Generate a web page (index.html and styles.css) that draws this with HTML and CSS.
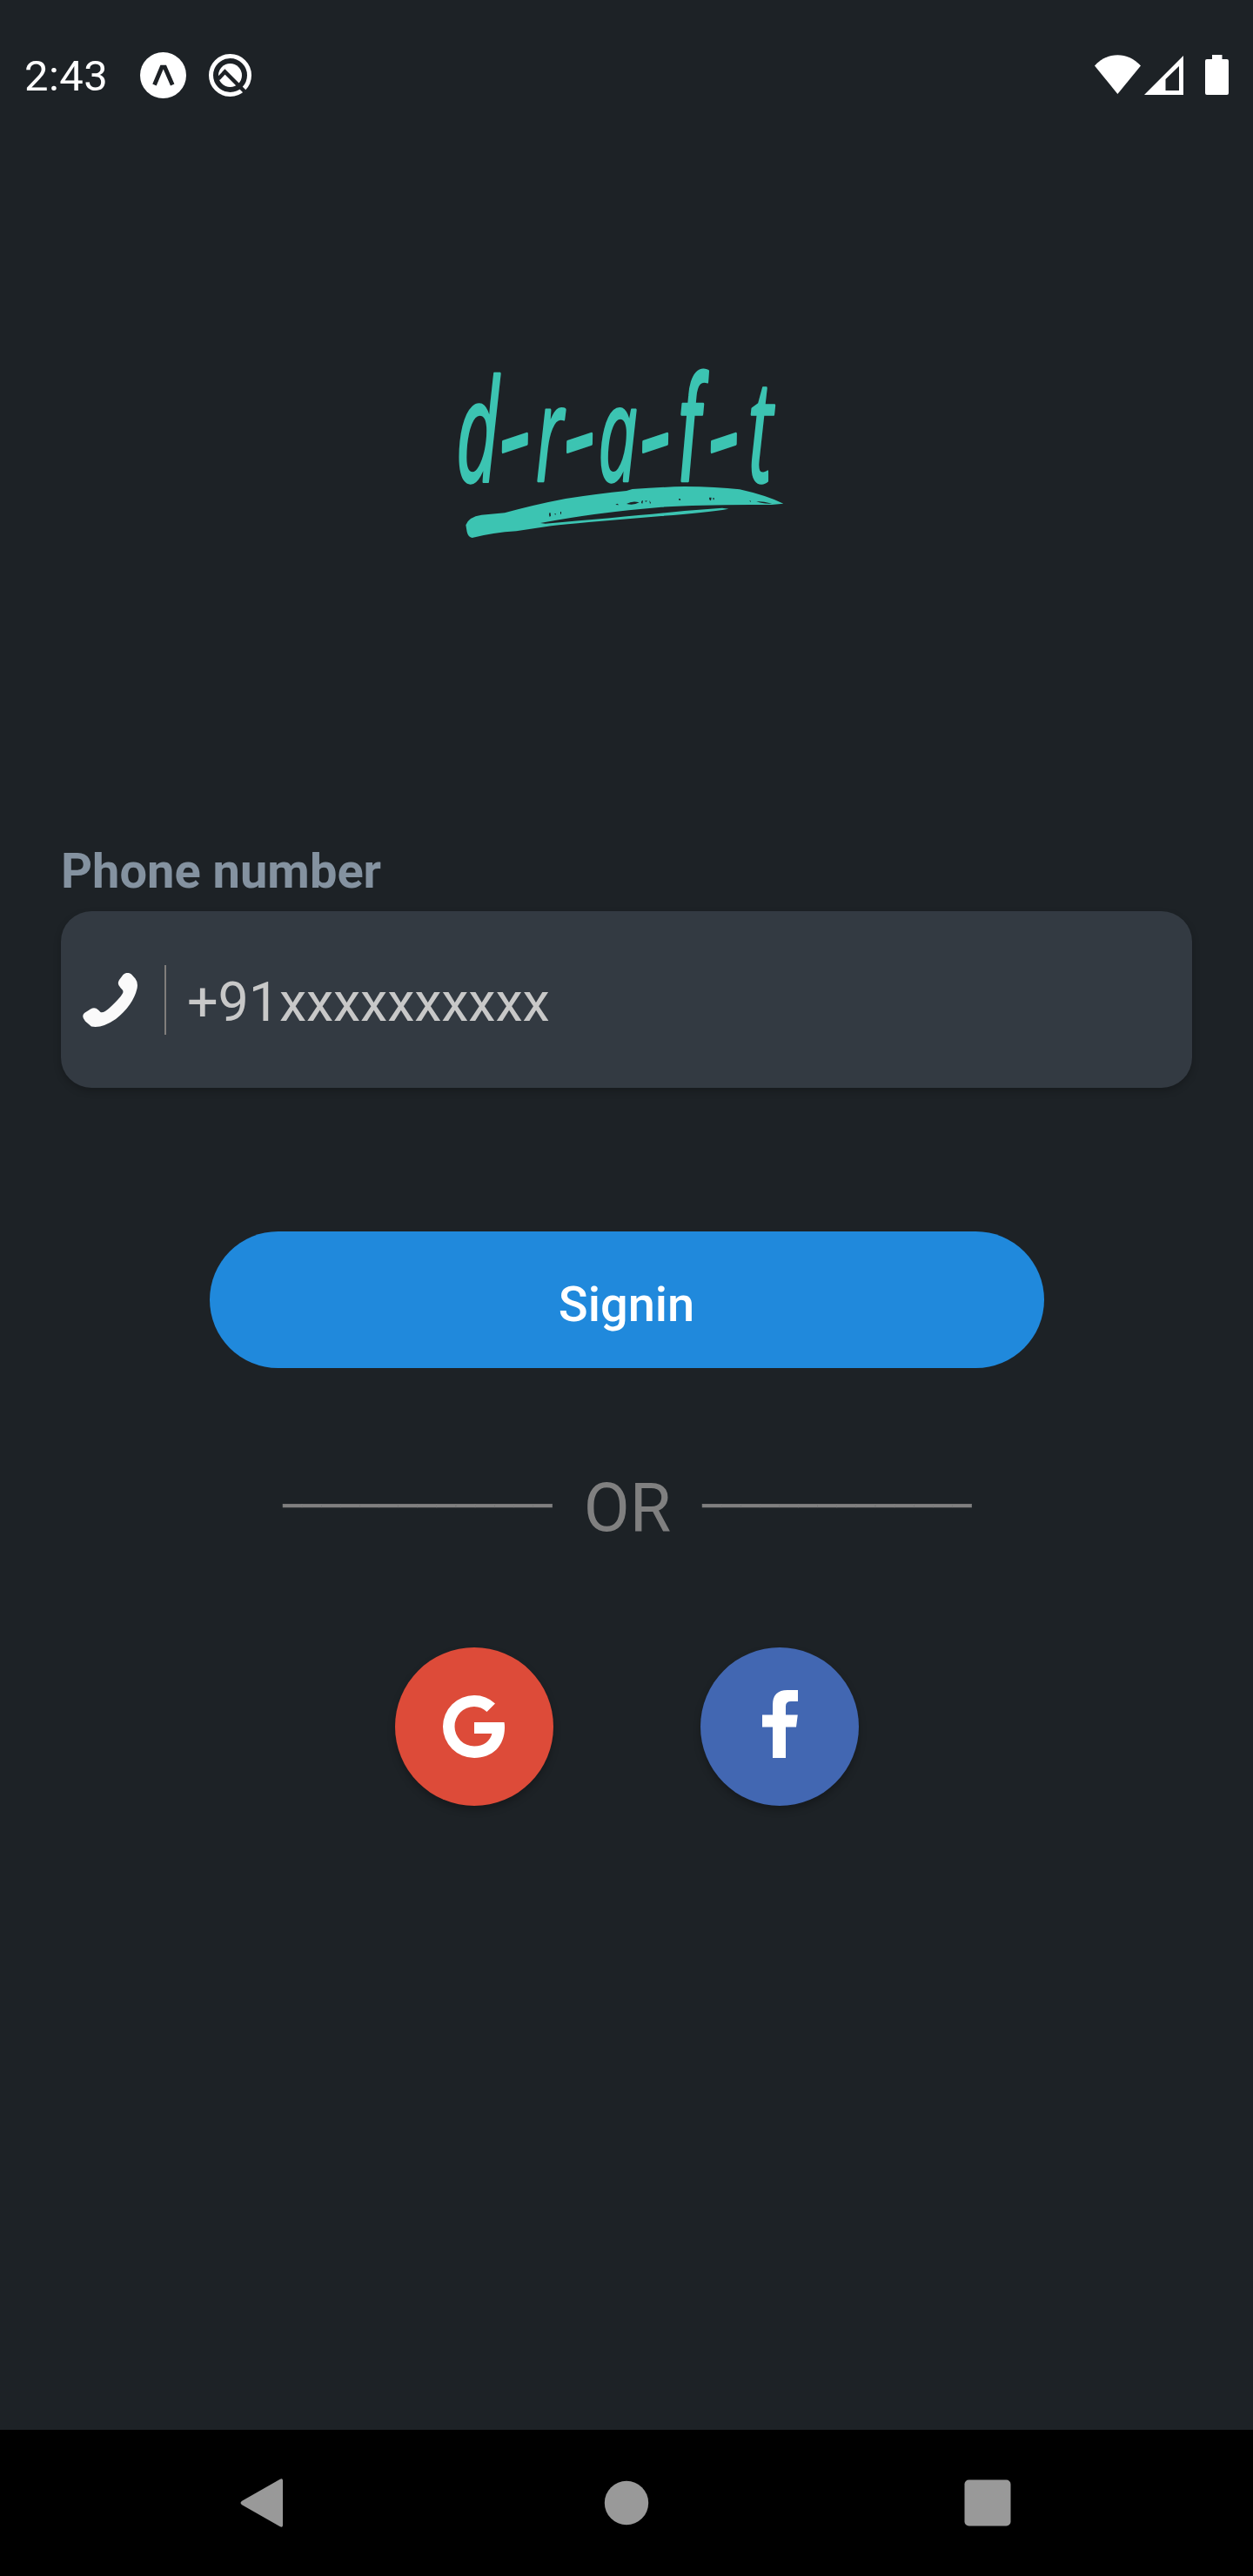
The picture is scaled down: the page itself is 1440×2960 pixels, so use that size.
FILE: index.html
```html
<!DOCTYPE html>
<html lang="en">
<head>
<meta charset="utf-8">
<title>Sign in</title>
<link rel="stylesheet" href="styles.css">
</head>
<body>
<header class="status">
  <span class="time">2:43</span>
  <svg class="expo" viewBox="0 0 53 53"><circle cx="26.5" cy="26.5" r="26.5" fill="#fff"/><path d="M16.5 37.5 25 17.2h3.4L37.2 37.5" fill="none" stroke="#1d2125" stroke-width="4.8"/></svg>
  <svg class="quick" viewBox="0 0 49 49"><circle cx="24.5" cy="24.5" r="22" fill="none" stroke="#fff" stroke-width="5"/><circle cx="24.5" cy="24.5" r="13.5" fill="#fff"/><path d="M11 28.500 18.500 20.500 41 43" fill="none" stroke="#1d2125" stroke-width="4.5"/></svg>
  <span class="spacer"></span>
  <svg class="wifi" viewBox="0 0 53 46"><path d="M26.4 45 0 12.5C15-4 38-4 53 12.5Z" fill="#fff"/></svg>
  <svg class="signal" viewBox="0 0 45 45"><path fill-rule="evenodd" d="M45 0V45H0ZM40 12 24.5 27V40H40Z" fill="#fff"/></svg>
  <svg class="battery" viewBox="0 0 27 46"><path d="M8 0H19.5V5H25a2 2 0 0 1 2 2V44a2 2 0 0 1-2 2H2a2 2 0 0 1-2-2V7a2 2 0 0 1 2-2H8Z" fill="#fff"/></svg>
</header>

<main class="login">
  <svg class="logo" viewBox="0 0 1200 660" role="img" aria-label="draft">
    <text class="wordmark" transform="translate(0 430) scale(.52 1)" x="82 398 612 826 1024 1328 1548 1782 2018" y="0 72 0 72 0 72 0 72 0" rotate="0 -10 0 -10 0 -10 0 -10 0"><tspan class="tall">d</tspan><tspan class="dash">-</tspan>r<tspan class="dash">-</tspan>a<tspan class="dash">-</tspan><tspan class="hook">f</tspan><tspan class="dash">-</tspan><tspan class="tall">t</tspan></text>
    <path fill="#3cc4b2" d="M76 580Q85 552 130 545L210 538Q310 510 420 489Q530 472 630 462L650 456Q750 449 830 447Q940 448 1020 457Q1110 477 1171 506L1130 510Q900 508 750 518Q520 537 333 573L350 575Q640 550 830 531L960 521 982 524Q900 538 750 549L500 570Q420 577 370 583L250 601Q170 606 98 624Q84 622 80 604Z"/>
    <path class="scratch" d="M630 507Q650 495 674 502Q655 513 630 507ZM1078 498Q1105 498 1132 506Q1100 508 1078 498ZM592 510l6-4 6 5ZM682 497l5-2-2 11-4-2ZM692 497l10-1-4 4ZM709 495l5 8-3 4ZM810 489l5 0 2 5-6 0ZM915 485l8 0-2 11-5-3ZM928 486l4 0 0 7-3 0ZM1054 495l5 2-2 4ZM364 538l4 0 1 10-4 4-2-8ZM381 541l6 0-2 4ZM402 534l3 0 0 10-3-3Z"/>
  </svg>

  <form class="form">
    <label class="label">Phone number</label>
    <div class="field">
      <svg class="phone" viewBox="0 0 63 62"><path d="M46.5 2Q51-2 56 1.500L60.500 6.500Q64 11 62.500 18Q58 37 38 53Q22 64 10 61.500L3 55.500Q-2 50 2 46L9 41.500Q14 38.500 18 42.500L20.500 45Q24 46.500 31 40Q45 27 46.500 22Q46.500 19.500 43.500 17Q39 13 42 8Z" fill="#fafafa"/></svg>
      <span class="divider"></span>
      <span class="placeholder">+91xxxxxxxxxx</span>
    </div>
    <button class="signin" type="button">Signin</button>
  </form>

  <div class="or">
    <span class="rule">______________</span>
    <span class="word">OR</span>
    <span class="rule">______________</span>
  </div>

  <div class="social">
    <span class="round google"><svg viewBox="0 0 182 182"><path d="M115 64.500 105.500 74A22 22 0 0 0 91 68A22.500 22.500 0 0 0 68.500 91A22.500 22.500 0 0 0 91 113.500C102 113.500 109.500 107.500 111.400 99H91V86H125.500Q126 88.500 126 92C126 113 112 127 91 127A36 36 0 0 1 91 55Q105 55 115 64.500Z"/></svg></span>
    <span class="round facebook"><svg viewBox="0 0 182 182"><path d="M83 127V91.500H71V77.500H83V66Q83 49 100 49H112V62H104Q98 62 98 67.500V77.500H111.800L110 91.500H98V127Z"/></svg></span>
  </div>
</main>

<nav class="nav">
  <svg viewBox="0 0 56 56"><path d="M5.500 25.500 48.500 1Q52 -1 52 2.500V53.500Q52 57 48.500 55L5.500 30.500Q1.500 28 5.500 25.500Z"/></svg>
  <svg class="home" viewBox="0 0 56 56"><circle cx="28" cy="28" r="25.200"/></svg>
  <svg viewBox="0 0 56 56"><rect x="1.500" y="1.500" width="53" height="53" rx="5"/></svg>
</nav>
</body>
</html>
```
FILE: styles.css
```css
* { box-sizing: border-box; }
body {
  margin: 0;
  width: 1440px;
  height: 2960px;
  display: flex;
  flex-direction: column;
  background: #1d2226;
  color: #fff;
  font-family: Roboto, sans-serif;
}
svg { display: block; flex: none; }

.status {
  height: 172px;
  display: flex;
  align-items: center;
  padding: 0 28px;
}
.time { font-size: 49px; line-height: 58px; padding-top: 4px; width: 133px; letter-spacing: .4px; }
.expo { width: 53px; height: 53px; }
.quick { width: 49px; height: 49px; margin-left: 26px; }
.spacer { flex: 1; }
.wifi { width: 53px; height: 46px; }
.signal { width: 45px; height: 45px; margin-left: 4px; }
.battery { width: 27px; height: 46px; margin-left: 25px; }

.login { flex: 1; display: flex; flex-direction: column; }
.logo { width: 400px; height: 220px; margin: 238px 0 0 510px; overflow: visible; }
.wordmark {
  font: italic 458px "Open Sans", "Noto Sans", sans-serif;
  fill: #3cc4b2;
  stroke: #3cc4b2;
  stroke-width: 10px;
  stroke-linejoin: round;
}
.wordmark .tall { font-size: 490px; }
.wordmark .dash { font-size: 700px; font-weight: 300; stroke-width: 12px; }
.wordmark .hook { font-family: Roboto, sans-serif; font-size: 500px; }
.scratch { fill: #1d2226; }

.form {
  margin: 338px 70px 0;
  display: flex;
  flex-direction: column;
}
.label {
  font-size: 56px;
  line-height: 66px;
  font-weight: 700;
  color: #8492a0;
}
.field {
  height: 203px;
  margin-top: 13px;
  padding-left: 25px;
  display: flex;
  align-items: center;
  border-radius: 35px;
  background: #333a42;
  box-shadow: 0 4px 8px rgba(0, 0, 0, .22);
}
.phone { width: 63px; height: 62px; }
.divider { width: 2px; height: 80px; margin-left: 31px; background: #807d7b; }
.placeholder {
  margin-left: 24px;
  padding-top: 7px;
  font-size: 63px;
  line-height: 74px;
  letter-spacing: -.2px;
  color: #c8c8c8;
}
.signin {
  align-self: center;
  width: 959px;
  height: 157px;
  margin-top: 165px;
  padding: 11px 0 0;
  border: 0;
  border-radius: 79px;
  background: #2089dc;
  color: #fff;
  font: 500 56px/66px Roboto, sans-serif;
}

.or {
  display: flex;
  justify-content: center;
  margin-top: 111px;
  height: 95px;
  color: #808080;
}
.rule { font-size: 49px; line-height: 58px; width: 308px; -webkit-text-stroke: .6px #808080; }
.word { width: 174px; padding: 5px 0 0 2px; text-align: center; font-size: 77px; line-height: 90px; }

.social {
  display: flex;
  justify-content: center;
  gap: 169px;
  margin-top: 115px;
}
.round {
  width: 182px;
  height: 182px;
  border-radius: 50%;
  box-shadow: 0 5px 9px rgba(0, 0, 0, .25);
}
.round svg { width: 182px; height: 182px; fill: #fff; }
.google { background: #dd4b39; }
.facebook { background: #4267b2; }

.nav {
  height: 168px;
  display: flex;
  align-items: center;
  justify-content: space-between;
  padding: 0 277px 0 273px;
  background: #000;
}
.nav svg { width: 56px; height: 56px; fill: #999; }
.nav .home { margin-left: 4px; }
```
